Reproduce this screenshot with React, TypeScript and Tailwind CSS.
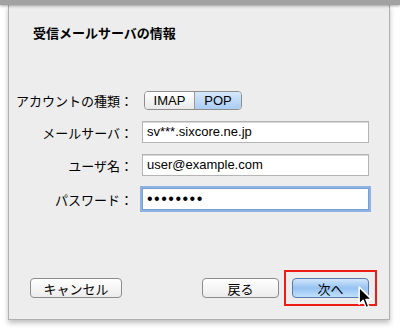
import React from "react";

const jp = { fontFamily: '"Noto Sans CJK JP", "Liberation Sans", sans-serif' };
const latin = { fontFamily: '"Liberation Sans", "Noto Sans CJK JP", sans-serif' };

function Row({ label, children }: { label: string; children: React.ReactNode }) {
  return (
    <div className="flex items-center">
      <div className="w-[126px] text-right text-[13px] text-black pr-[2px] leading-none" style={jp}>
        {label}
      </div>
      <div className="ml-[7px]">{children}</div>
    </div>
  );
}

function Field({ children, focused }: { children: React.ReactNode; focused?: boolean }) {
  return (
    <div
      className={
        "w-[227px] h-[22px] bg-white flex items-center px-[4px] text-[13px] text-black " +
        (focused
          ? "border border-[#7a9fd0] shadow-[0_0_0_2px_#8db2e3]"
          : "border border-[#b4b4b4] shadow-[inset_0_1px_0_#d8d8d8]")
      }
      style={latin}
    >
      {children}
    </div>
  );
}

export default function App() {
  return (
    <div className="w-[400px] h-[331px] bg-white relative overflow-hidden">
      <div className="h-[5px] bg-[#a2a2a2] shadow-[0_1px_3px_rgba(0,0,0,0.35)] relative z-10" />
      <div className="ml-[8px] w-[382px] h-[315px] bg-[#ededed] border-x border-b border-[#b0b0b0] shadow-[0_3px_5px_rgba(0,0,0,0.25)] flex flex-col">
        <h1 className="pl-[24px] pt-[21px] text-[13px] font-bold text-black leading-none" style={jp}>
          受信メールサーバの情報
        </h1>

        <div className="mt-[52px] flex flex-col gap-[11px]">
          <Row label="アカウントの種類：">
            <div className="flex ml-[2px] h-[19px] rounded-[4px] border border-[#8e8e8e] overflow-hidden text-[13px] leading-none" style={latin}>
              <div className="w-[50px] flex items-center justify-center bg-gradient-to-b from-white to-[#e9e9e9] border-r border-[#9a9a9a] text-black">
                IMAP
              </div>
              <div className="w-[46px] flex items-center justify-center bg-gradient-to-b from-[#d6e8fb] to-[#a9cdf3] text-black">
                POP
              </div>
            </div>
          </Row>
          <Row label="メールサーバ：">
            <Field>sv***.sixcore.ne.jp</Field>
          </Row>
          <Row label="ユーザ名：">
            <Field>user@example.com</Field>
          </Row>
          <div className="mt-[1px]">
            <Row label="パスワード：">
              <Field focused>
                <span className="text-[16px] tracking-[1.5px] leading-none">••••••••</span>
              </Field>
            </Row>
          </div>
        </div>

        <div className="mt-auto mb-[13px] flex items-center">
          <button
            className="ml-[21px] w-[92px] h-[20px] rounded-[4px] border border-[#8c8c8c] bg-gradient-to-b from-white to-[#ececec] text-[13px] text-black leading-none"
            style={jp}
          >
            キャンセル
          </button>
          <button
            className="ml-[80px] w-[77px] h-[20px] rounded-[4px] border border-[#8c8c8c] bg-gradient-to-b from-white to-[#ececec] text-[13px] text-black leading-none"
            style={jp}
          >
            戻る
          </button>
          <div className="ml-[5px] p-[6px] border-2 border-[#ee1c14] relative">
            <button
              className="w-[77px] h-[20px] rounded-[4px] border border-[#5a78a8] bg-gradient-to-b from-[#d2e6fb] via-[#96c3f2] to-[#bfe0fb] text-[13px] text-black leading-none block"
              style={jp}
            >
              次へ
            </button>
            {/* mouse pointer */}
            <svg className="absolute left-[72px] top-[14px]" width="16" height="25" viewBox="0 0 14 22">
              <path d="M1 1 L1 16 L4.5 12.5 L7 19 L9.5 18 L7 11.8 L12 11.8 Z" fill="black" stroke="white" strokeWidth="1.3" strokeLinejoin="round" />
            </svg>
          </div>
        </div>
      </div>
    </div>
  );
}
